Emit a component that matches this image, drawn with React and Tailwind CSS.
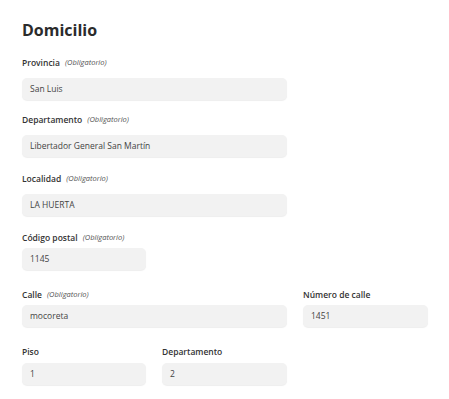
import React from "react";

const font = { fontFamily: '"Open Sans", "Noto Sans", sans-serif' };

function Label({ text, req, gap }) {
  return (
    <div className={`h-[12px] flex items-center gap-[5px] ${gap}`}>
      <span className="text-[8.5px] font-semibold text-[#333] leading-none">{text}</span>
      {req && <span className="text-[7.5px] italic text-[#555] leading-none">(Obligatorio)</span>}
    </div>
  );
}

function Field({ label, req, value, gap = "mb-[9px]", className = "" }) {
  return (
    <div className={className}>
      <Label text={label} req={req} gap={gap} />
      <div className="h-[22px] rounded-[5px] bg-[#f2f2f2] shadow-[0_1px_1px_rgba(0,0,0,0.07)] flex items-center px-[8px] text-[8.5px] text-[#444]">
        {value}
      </div>
    </div>
  );
}

export default function App() {
  return (
    <div className="w-[449px] h-[399px] bg-white pl-[22px] pt-[17px]" style={font}>
      <h1 className="text-[16px] font-bold text-[#2b2b2b] leading-[26px] mb-[14px]">Domicilio</h1>
      <div className="flex flex-col">
        <Field className="w-[265px]" label="Provincia" req value="San Luis" />
        <Field className="w-[265px] mt-[14px]" label="Departamento" req value="Libertador General San Martín" />
        <Field className="w-[265px] mt-[16px]" label="Localidad" req value="LA HUERTA" />
        <Field className="w-[124px] mt-[16px]" gap="mb-[4px]" label="Código postal" req value="1145" />
        <div className="flex gap-[16px] mt-[19px]">
          <Field className="w-[265px]" gap="mb-[4px]" label="Calle" req value="mocoreta" />
          <Field className="w-[125px]" gap="mb-[4px]" label="Número de calle" value="1451" />
        </div>
        <div className="flex gap-[16px] mt-[19px]">
          <Field className="w-[124px]" gap="mb-[5px]" label="Piso" value="1" />
          <Field className="w-[125px]" gap="mb-[5px]" label="Departamento" value="2" />
        </div>
      </div>
    </div>
  );
}
